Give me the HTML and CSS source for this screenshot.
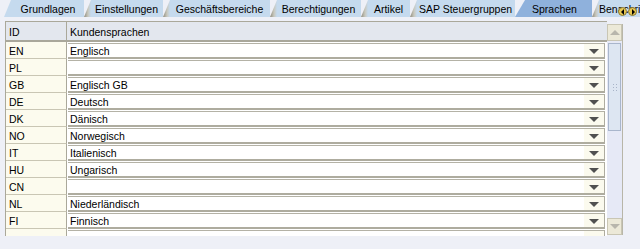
FILE: index.html
```html
<!DOCTYPE html>
<html lang="de">
<head>
  <meta charset="UTF-8" />
  <title>Sprachen</title>
  <link rel="stylesheet" href="styles.css">
</head>
<body>
  <div class="tabs">
    <div class="tab first w80">Grundlagen</div>
    <div class="tab w79">Einstellungen</div>
    <div class="tab w107">Geschäftsbereiche</div>
    <div class="tab w91">Berechtigungen</div>
    <div class="tab w49">Artikel</div>
    <div class="tab w105">SAP Steuergruppen</div>
    <div class="tab active w77">Sprachen</div>
    <div class="tab last">Benachrichtigungen</div>
    <div class="tab-nav">
      <span class="nav-btn"><i class="tri-left"></i></span>
      <span class="nav-btn"><i class="tri-right"></i></span>
    </div>
  </div>

  <div class="grid-wrap">
    <div class="grid">
      <div class="row head">
        <div class="cell id">ID</div>
        <div class="cell name">Kundensprachen</div>
      </div>
      <div id="rows"></div>
    </div>
    <div class="scrollbar">
      <div class="sb-btn up"><i></i></div>
      <div class="sb-track">
        <div class="sb-thumb"><span class="grip"></span></div>
      </div>
      <div class="sb-btn down"><i></i></div>
    </div>
  </div>

  <script>
    const sprachen = [
      ["EN", "Englisch"],
      ["PL", ""],
      ["GB", "Englisch GB"],
      ["DE", "Deutsch"],
      ["DK", "Dänisch"],
      ["NO", "Norwegisch"],
      ["IT", "Italienisch"],
      ["HU", "Ungarisch"],
      ["CN", ""],
      ["NL", "Niederländisch"],
      ["FI", "Finnisch"],
      ["", ""]
    ];

    const rows = document.getElementById("rows");
    sprachen.forEach(([id, name]) => {
      const row = document.createElement("div");
      row.className = "row";
      row.innerHTML =
        `<div class="cell id">${id}</div>` +
        `<div class="cell value"><div class="combo"><span class="combo-text">${name}</span><span class="combo-arrow"><i></i></span></div></div>`;
      rows.appendChild(row);
    });
  </script>
</body>
</html>
```

FILE: styles.css
```css
html, body {
  margin: 0;
  padding: 0;
}

body {
  width: 640px;
  height: 249px;
  overflow: hidden;
  background: #eef0f7;
  font-family: "Liberation Sans", Arial, sans-serif;
  font-size: 10.5px;
  color: #000;
}

/* tabs */
.tabs {
  display: flex;
  height: 18px;
  padding-left: 4px;
  position: relative;
  white-space: nowrap;
}

.tab {
  box-sizing: border-box;
  flex: 0 0 auto;
  height: 17px;
  line-height: 18px;
  padding-left: 6px;
  text-align: center;
  overflow: hidden;
  background: linear-gradient(to right, #8f8d80 0, #c9c8bd 4px, #c5daee 7px);
  clip-path: polygon(7px 0, 100% 0, 100% 100%, 0 100%);
}

.w80 { width: 80px; }
.w79 { width: 79px; }
.w107 { width: 107px; }
.w91 { width: 91px; }
.w49 { width: 49px; }
.w105 { width: 105px; }
.w77 { width: 77px; }

.tab.first {
  background: #c5daee;
  padding-left: 8px;
}

.tab.active {
  background: #8fb1dc;
  padding-left: 2px;
  clip-path: polygon(10px 0, 100% 0, 100% 100%, 0 100%);
}

.tab.last {
  flex: 1 1 auto;
  text-align: left;
  padding-left: 7px;
}

.tab-nav {
  position: absolute;
  right: 3px;
  top: 7px;
  display: flex;
  gap: 1px;
}

.nav-btn {
  width: 7px;
  height: 7px;
  border-radius: 50%;
  background: #e8c850;
  border: 1px solid #8a7a38;
  display: flex;
  align-items: center;
  justify-content: center;
}

.tri-left, .tri-right {
  width: 0;
  height: 0;
  border-top: 3px solid transparent;
  border-bottom: 3px solid transparent;
}

.tri-left { border-right: 3px solid #000; }
.tri-right { border-left: 3px solid #000; margin-left: 1px; }

/* grid */
.grid-wrap {
  display: flex;
  margin: 3px 0 0 5px;
  height: 215px;
}

.grid {
  width: 601px;
  border-left: 1px solid #aaa89a;
  border-top: 1px solid #aaa89a;
  overflow: hidden;
  background: #fff;
}

.row {
  display: flex;
  height: 17px;
}

.row.head {
  height: 18px;
  background: #e3e7ee;
  border-bottom: 2px solid #a9a79b;
}

.cell {
  box-sizing: border-box;
  line-height: 18px;
}

.cell.id {
  width: 61px;
  padding-left: 3px;
  background: #fcfbee;
  border-right: 1px solid #aaa89a;
  border-bottom: 1px solid #c9c6b4;
}

.head .cell {
  line-height: 20px;
  background: #e3e7ee;
  border-bottom: none;
}

.head .cell.name {
  flex: 1;
  padding-left: 3px;
}

.cell.value {
  flex: 1;
  padding: 1px 2px 0 1px;
  background: #fff;
}

.combo {
  display: flex;
  height: 13px;
  border-top: 1px solid #b4b2a6;
  border-bottom: 2px solid #aeac9f;
  border-right: 1px solid #aeac9f;
  background: #fff;
}

.combo-text {
  flex: 1;
  line-height: 15px;
  padding-left: 2px;
  overflow: hidden;
}

.combo-arrow {
  width: 20px;
  background: #fbfaee;
  display: flex;
  align-items: center;
  justify-content: center;
}

.combo-arrow i {
  width: 0;
  height: 0;
  border-left: 5px solid transparent;
  border-right: 5px solid transparent;
  border-top: 5px solid #505050;
  margin-top: 1px;
}

/* scrollbar */
.scrollbar {
  width: 15px;
  margin-top: 3px;
  height: 211px;
  display: flex;
  flex-direction: column;
  border-right: 1px solid #b8b6a8;
}

.sb-btn {
  height: 17px;
  background: #ece9d8;
  border: 1px solid #c9c6b4;
  box-sizing: border-box;
  display: flex;
  align-items: center;
  justify-content: center;
}

.sb-btn i {
  width: 0;
  height: 0;
  border-left: 5px solid transparent;
  border-right: 5px solid transparent;
}

.sb-btn.up i { border-bottom: 5px solid #b8b6ac; }
.sb-btn.down i { border-top: 5px solid #b8b6ac; }

.sb-track {
  flex: 1;
  background: #e6e9f6;
  padding-top: 2px;
}

.sb-thumb {
  height: 86px;
  margin: 0 1px;
  border: 1px solid #a9b6cc;
  background: #dde6f2;
  display: flex;
  align-items: center;
  justify-content: center;
}

.grip {
  width: 6px;
  height: 8px;
  background:
    radial-gradient(circle, #a8b4c8 0.8px, transparent 1px) 0 0 / 3px 3px;
}
```
